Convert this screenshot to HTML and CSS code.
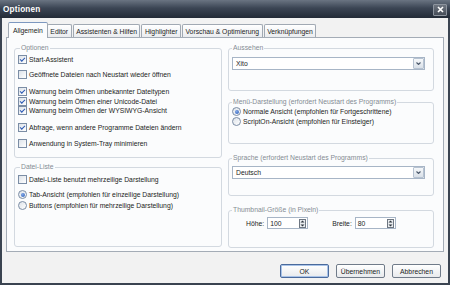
FILE: index.html
```html
<!DOCTYPE HTML>
<html lang="de">
<head>
    <meta charset="UTF-8">
    <meta name="viewport" content="width=device-width, initial-scale=1">
    <title>Optionen</title>
    <link rel="stylesheet" href="styles.css">
</head>
<body>

<div class="window">
    <!-- Titelleiste -->
    <div class="titlebar">
        <span class="title">Optionen</span>
        <div class="close-button">
            <svg width="7" height="7" viewBox="0 0 7 7"><path d="M1 1 L6 6 M6 1 L1 6" stroke="#fff" stroke-width="1.6" fill="none"/></svg>
        </div>
    </div>

    <div class="client">
        <!-- Reiter -->
        <div class="tabs">
            <div class="tab active">Allgemein</div>
            <div class="tab">Editor</div>
            <div class="tab">Assistenten &amp; Hilfen</div>
            <div class="tab">Highlighter</div>
            <div class="tab">Vorschau &amp; Optimierung</div>
            <div class="tab">Verknüpfungen</div>
        </div>

        <div class="panel">
            <!-- linke Spalte -->
            <div class="column column-left">
                <fieldset class="group group-options">
                    <legend>Optionen</legend>
                    <label class="check first"><span class="box checked"></span>Start-Assistent</label>
                    <label class="check gap-5"><span class="box"></span>Geöffnete Dateien nach Neustart wieder öffnen</label>
                    <label class="check gap-8"><span class="box checked"></span>Warnung beim Öffnen unbekannter Dateitypen</label>
                    <label class="check"><span class="box checked"></span>Warnung beim Öffnen einer Unicode-Datei</label>
                    <label class="check"><span class="box checked"></span>Warnung beim Öffnen der WYSIWYG-Ansicht</label>
                    <label class="check gap-7"><span class="box checked"></span>Abfrage, wenn andere Programme Dateien ändern</label>
                    <label class="check gap-6"><span class="box"></span>Anwendung in System-Tray minimieren</label>
                </fieldset>

                <fieldset class="group group-files">
                    <legend>Datei-Liste</legend>
                    <label class="check gap-4"><span class="box"></span>Datei-Liste benutzt mehrzeilige Darstellung</label>
                    <label class="check radio-row gap-5"><span class="radio checked"></span>Tab-Ansicht (empfohlen für einzeilige Darstellung)</label>
                    <label class="check radio-row"><span class="radio"></span>Buttons (empfohlen für mehrzeilige Darstellung)</label>
                </fieldset>
            </div>

            <!-- rechte Spalte -->
            <div class="column column-right">
                <fieldset class="group group-look">
                    <legend>Aussehen</legend>
                    <div class="select">
                        <span class="select-value">Xito</span>
                        <span class="drop-button"><svg width="5" height="3" viewBox="0 0 5 3"><path d="M0.5 0.5 L2.5 2.5 L4.5 0.5" stroke="#4b586b" stroke-width="1.1" fill="none"/></svg></span>
                    </div>
                </fieldset>

                <fieldset class="group group-menu">
                    <legend>Menü-Darstellung (erfordert Neustart des Programms)</legend>
                    <label class="check first-radio"><span class="radio checked"></span>Normale Ansicht (empfohlen für Fortgeschrittene)</label>
                    <label class="check"><span class="radio"></span>ScriptOn-Ansicht (empfohlen für Einsteiger)</label>
                </fieldset>

                <fieldset class="group group-lang">
                    <legend>Sprache (erfordert Neustart des Programms)</legend>
                    <div class="select select-lang">
                        <span class="select-value">Deutsch</span>
                        <span class="drop-button"><svg width="5" height="3" viewBox="0 0 5 3"><path d="M0.5 0.5 L2.5 2.5 L4.5 0.5" stroke="#4b586b" stroke-width="1.1" fill="none"/></svg></span>
                    </div>
                </fieldset>

                <fieldset class="group group-thumb">
                    <legend>Thumbnail-Größe (in Pixeln)</legend>
                    <div class="size-row">
                        <span>Höhe:</span>
                        <div class="spin">
                            <span class="spin-value">100</span>
                            <svg class="spin-buttons" width="7" height="9" viewBox="0 0 7 9"><rect x="0.5" y="0.5" width="6" height="8" fill="#e9ecef" stroke="#6e7782"/><path d="M1.5 3.5 L3.5 1.5 L5.5 3.5 Z M1.5 5.5 L3.5 7.5 L5.5 5.5 Z" fill="#2f3740"/></svg>
                        </div>
                        <span class="label-width">Breite:</span>
                        <div class="spin">
                            <span class="spin-value">80</span>
                            <svg class="spin-buttons" width="7" height="9" viewBox="0 0 7 9"><rect x="0.5" y="0.5" width="6" height="8" fill="#e9ecef" stroke="#6e7782"/><path d="M1.5 3.5 L3.5 1.5 L5.5 3.5 Z M1.5 5.5 L3.5 7.5 L5.5 5.5 Z" fill="#2f3740"/></svg>
                        </div>
                    </div>
                </fieldset>
            </div>
        </div>

        <!-- Schaltflächen -->
        <div class="footer">
            <div class="button default">OK</div>
            <div class="button">Übernehmen</div>
            <div class="button">Abbrechen</div>
        </div>
    </div>
</div>

</body>
</html>
```

FILE: styles.css
```css
* {
    box-sizing: border-box;
}
body {
    margin: 0;
    background: #f2f2f2;
    font-family: "Liberation Sans", Arial, sans-serif;
    font-size: 6.8px;
    color: #1c1c1c;
}
.window {
    width: 450px;
    height: 285px;
    display: flex;
    flex-direction: column;
}

/* Titelleiste */
.titlebar {
    height: 18px;
    display: flex;
    align-items: center;
    justify-content: space-between;
    padding: 1px 3px 0 3px;
    background: linear-gradient(#6a7482, #3b4554 45%, #232b37);
}
.title {
    color: #fff;
    font-weight: bold;
    font-size: 8.2px;
    letter-spacing: 0.2px;
}
.close-button {
    width: 14px;
    height: 12px;
    display: flex;
    align-items: center;
    justify-content: center;
    border: 1px solid #8d949e;
    border-radius: 1px;
    background: linear-gradient(#6e7580, #464d58);
}

/* Fensterinhalt */
.client {
    flex: 1;
    padding: 4px 4px 0 4px;
    background: #f2f2f2;
    border: 2px solid #3a4350;
    border-top: 0;
}
.tabs {
    display: flex;
    align-items: flex-end;
    height: 16px;
    padding-left: 4px;
    margin-bottom: -1px;
}
.tab {
    height: 13px;
    display: flex;
    align-items: center;
    padding: 0 2.5px;
    margin: 0 1px 1px 0;
    white-space: nowrap;
    border: 1px solid #a1a9b3;
    border-bottom: 0;
    border-radius: 2px 2px 0 0;
    background: linear-gradient(#ffffff, #eaecef);
}
.tab.active {
    position: relative;
    z-index: 1;
    height: 16px;
    margin: 0 -1px 0 -2px;
    padding: 0 4px;
    border-top-color: #7d98c0;
    background: #fbfcfd;
}
.panel {
    height: 215px;
    display: grid;
    grid-template-columns: 208px 206px;
    column-gap: 6px;
    align-items: start;
    padding: 6px 9px 0 7px;
    border: 1px solid #a4acb6;
    background: #fbfcfd;
}
.column {
    display: flex;
    flex-direction: column;
}

/* Gruppen */
.group {
    margin: 0;
    padding: 0 3px;
    min-width: 0;
    border: 1px solid #d3d9e0;
    border-radius: 3px;
}
.group legend {
    padding: 0 1px;
    margin-left: 2px;
    line-height: 8px;
    color: #858c94;
}
.column-right .group legend {
    margin-left: 0;
}
.group-options {
    height: 114px;
}
.group-files {
    height: 84px;
    margin-top: 5px;
}
.group-look {
    height: 47px;
}
.group-menu {
    height: 46px;
    margin-top: 7px;
}
.group-lang {
    height: 42px;
    margin-top: 10px;
}
.group-thumb {
    height: 42px;
    margin-top: 10px;
}

/* Kontrollkästchen und Optionsfelder */
.check {
    display: flex;
    align-items: center;
    gap: 2px;
    height: 9.5px;
    white-space: nowrap;
}
.check.first {
    margin-top: 3px;
}
.check.first-radio {
    margin-top: 1px;
}
.radio-row {
    height: 10.5px;
}
.gap-4 { margin-top: 4px; }
.gap-5 { margin-top: 5px; }
.gap-6 { margin-top: 6.5px; }
.gap-7 { margin-top: 7.5px; }
.gap-8 { margin-top: 8px; }

.box, .radio {
    flex-shrink: 0;
    width: 9px;
    height: 9px;
    display: flex;
    align-items: center;
    justify-content: center;
    border: 1px solid #7b8da5;
    background: linear-gradient(135deg, #dce2e9, #ffffff);
}
.radio {
    border-radius: 50%;
}
.box.checked::after {
    content: "";
    width: 4px;
    height: 2px;
    border-left: 1.5px solid #2a58b3;
    border-bottom: 1.5px solid #2a58b3;
    transform: translateY(-0.5px) rotate(-45deg);
}
.radio.checked::after {
    content: "";
    width: 4px;
    height: 4px;
    border-radius: 50%;
    background: radial-gradient(circle at 40% 35%, #7fa6e6, #2a5bb5);
}

/* Auswahllisten */
.select {
    width: 193px;
    height: 13px;
    margin-top: 5px;
    display: flex;
    align-items: center;
    border: 1px solid #a7b5c6;
    background: #fff;
}
.select-lang {
    margin-top: 4px;
}
.select-value {
    flex: 1;
    padding-left: 3px;
}
.drop-button {
    width: 11px;
    height: 11px;
    display: flex;
    align-items: center;
    justify-content: center;
    border: 1px solid #b6c2d1;
    border-radius: 1px;
    background: linear-gradient(#f6f8fa, #d9e0e8);
}

/* Thumbnail-Größe */
.size-row {
    display: flex;
    align-items: center;
    gap: 3px;
    margin-top: 3px;
    padding-left: 14px;
}
.label-width {
    margin-left: 21px;
}
.spin {
    width: 41px;
    height: 12px;
    display: flex;
    align-items: center;
    border: 1px solid #a7b5c6;
    background: #fff;
}
.spin-value {
    flex: 1;
    padding-left: 2px;
}
.spin-buttons {
    margin-right: 1px;
}

/* Schaltflächen */
.footer {
    display: flex;
    justify-content: flex-end;
    gap: 7px;
    margin-top: 12px;
    padding-right: 3px;
}
.button {
    width: 49px;
    height: 14px;
    display: flex;
    align-items: center;
    justify-content: center;
    border: 1px solid #707b89;
    border-radius: 2px;
    background: linear-gradient(#ffffff, #e8eaed);
}
.button.default {
    border-color: #4a6a9c;
    box-shadow: inset 0 0 0 1px #a9c3e8;
}
```
